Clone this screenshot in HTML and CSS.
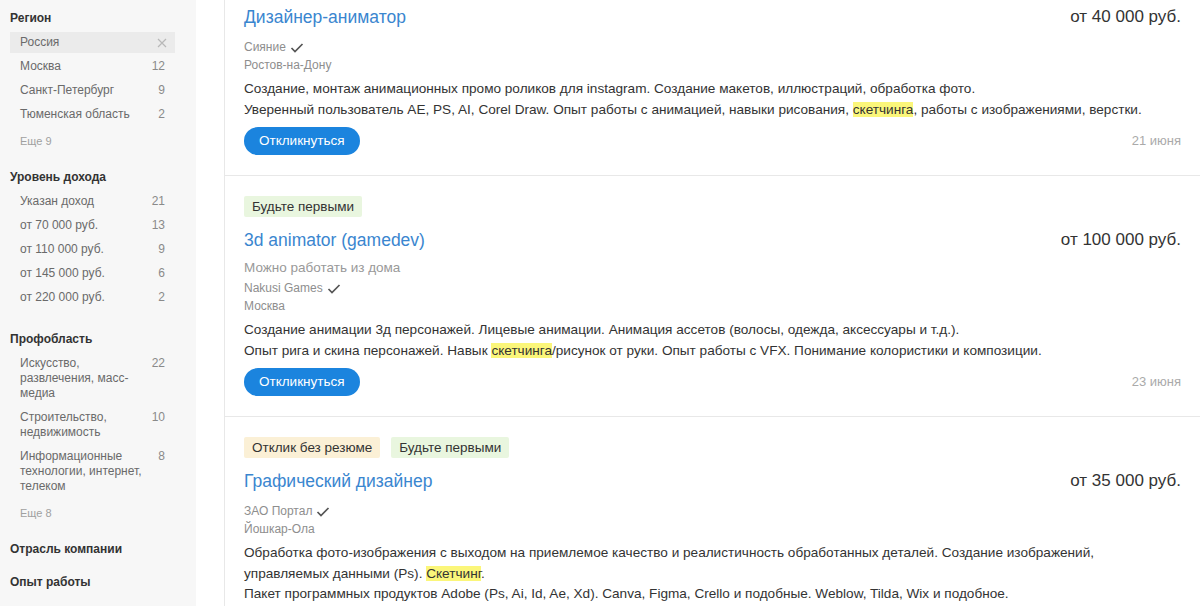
FILE: index.html
```html
<!DOCTYPE html>
<html lang="ru">
<head>
<meta charset="utf-8">
<title>Вакансии</title>
<link rel="stylesheet" href="styles.css">
</head>
<body>
<div class="page">
  <aside class="sidebar">
    <section class="filter">
      <h3 class="filter-title">Регион</h3>
      <ul class="filter-list">
        <li class="filter-item is-selected"><span class="filter-name">Россия</span>
          <svg class="filter-clear" width="10" height="10" viewBox="0 0 10 10"><path d="M1 1 L9 9 M9 1 L1 9" stroke="#b8b8b8" stroke-width="1.2" fill="none"/></svg>
        </li>
        <li class="filter-item"><span class="filter-name">Москва</span><span class="filter-count">12</span></li>
        <li class="filter-item"><span class="filter-name">Санкт-Петербург</span><span class="filter-count">9</span></li>
        <li class="filter-item"><span class="filter-name">Тюменская область</span><span class="filter-count">2</span></li>
      </ul>
      <div class="filter-more">Еще 9</div>
    </section>
    <section class="filter">
      <h3 class="filter-title">Уровень дохода</h3>
      <ul class="filter-list">
        <li class="filter-item"><span class="filter-name">Указан доход</span><span class="filter-count">21</span></li>
        <li class="filter-item"><span class="filter-name">от 70 000 руб.</span><span class="filter-count">13</span></li>
        <li class="filter-item"><span class="filter-name">от 110 000 руб.</span><span class="filter-count">9</span></li>
        <li class="filter-item"><span class="filter-name">от 145 000 руб.</span><span class="filter-count">6</span></li>
        <li class="filter-item"><span class="filter-name">от 220 000 руб.</span><span class="filter-count">2</span></li>
      </ul>
    </section>
    <section class="filter">
      <h3 class="filter-title">Профобласть</h3>
      <ul class="filter-list">
        <li class="filter-item"><span class="filter-name">Искусство, развлечения, масс-медиа</span><span class="filter-count">22</span></li>
        <li class="filter-item"><span class="filter-name">Строительство, недвижимость</span><span class="filter-count">10</span></li>
        <li class="filter-item"><span class="filter-name">Информационные технологии, интернет, телеком</span><span class="filter-count">8</span></li>
      </ul>
      <div class="filter-more">Еще 8</div>
    </section>
    <section class="filter">
      <h3 class="filter-title">Отрасль компании</h3>
    </section>
    <section class="filter">
      <h3 class="filter-title">Опыт работы</h3>
    </section>
  </aside>

  <div class="spacer"></div>

  <main class="results">
    <article class="vacancy vacancy-first">
      <div class="vacancy-head">
        <a class="vacancy-title">Дизайнер-аниматор</a>
        <span class="vacancy-salary">от 40 000 руб.</span>
      </div>
      <div class="vacancy-meta">
        <div class="vacancy-company">Сияние <svg class="check" width="14" height="10" viewBox="0 0 14 10"><path d="M1.5 5 L5 8.5 L12.5 1" stroke="#555" stroke-width="1.7" fill="none"/></svg></div>
        <div class="vacancy-city">Ростов-на-Дону</div>
      </div>
      <p class="vacancy-desc">Создание, монтаж анимационных промо роликов для instagram. Создание макетов, иллюстраций, обработка фото.<br>Уверенный пользователь AE, PS, AI, Corel Draw. Опыт работы с анимацией, навыки рисования, <mark>скетчинга</mark>, работы с изображениями, верстки.</p>
      <div class="vacancy-foot">
        <button class="btn-respond">Откликнуться</button>
        <span class="vacancy-date">21 июня</span>
      </div>
    </article>

    <article class="vacancy">
      <div class="vacancy-badges">
        <span class="badge badge-green">Будьте первыми</span>
      </div>
      <div class="vacancy-head">
        <a class="vacancy-title">3d animator (gamedev)</a>
        <span class="vacancy-salary">от 100 000 руб.</span>
      </div>
      <div class="vacancy-remote">Можно работать из дома</div>
      <div class="vacancy-meta vacancy-meta-tight">
        <div class="vacancy-company">Nakusi Games <svg class="check" width="14" height="10" viewBox="0 0 14 10"><path d="M1.5 5 L5 8.5 L12.5 1" stroke="#555" stroke-width="1.7" fill="none"/></svg></div>
        <div class="vacancy-city">Москва</div>
      </div>
      <p class="vacancy-desc">Создание анимации 3д персонажей. Лицевые анимации. Анимация ассетов (волосы, одежда, аксессуары и т.д.).<br>Опыт рига и скина персонажей. Навык <mark>скетчинга</mark>/рисунок от руки. Опыт работы с VFX. Понимание колористики и композиции.</p>
      <div class="vacancy-foot">
        <button class="btn-respond">Откликнуться</button>
        <span class="vacancy-date">23 июня</span>
      </div>
    </article>

    <article class="vacancy">
      <div class="vacancy-badges">
        <span class="badge badge-yellow">Отклик без резюме</span>
        <span class="badge badge-green">Будьте первыми</span>
      </div>
      <div class="vacancy-head">
        <a class="vacancy-title">Графический дизайнер</a>
        <span class="vacancy-salary">от 35 000 руб.</span>
      </div>
      <div class="vacancy-meta">
        <div class="vacancy-company">ЗАО Портал <svg class="check" width="14" height="10" viewBox="0 0 14 10"><path d="M1.5 5 L5 8.5 L12.5 1" stroke="#555" stroke-width="1.7" fill="none"/></svg></div>
        <div class="vacancy-city">Йошкар-Ола</div>
      </div>
      <p class="vacancy-desc">Обработка фото-изображения с выходом на приемлемое качество и реалистичность обработанных деталей. Создание изображений,<br>управляемых данными (Ps). <mark>Скетчинг</mark>.<br>Пакет программных продуктов Adobe (Ps, Ai, Id, Ae, Xd). Canva, Figma, Crello и подобные. Weblow, Tilda, Wix и подобное.</p>
    </article>
  </main>
</div>
</body>
</html>
```

FILE: styles.css
```css
* { box-sizing: border-box; }

html, body {
  margin: 0;
  padding: 0;
  height: 100%;
  overflow: hidden;
  background: #fff;
  font-family: "Liberation Sans", Arial, sans-serif;
  color: #333;
}

.page {
  display: flex;
  min-height: 100vh;
}

/* Sidebar */
.sidebar {
  width: 196px;
  flex: none;
  background: #f7f7f7;
  padding: 10px 21px 0 10px;
}

.filter {
  margin-bottom: 17px;
}

.filter-title {
  margin: 0 0 6px;
  font-size: 12px;
  line-height: 16px;
  font-weight: bold;
  color: #333;
}

.filter-list {
  list-style: none;
  margin: 0;
  padding: 0 0 3px;
}

.filter-item {
  display: flex;
  justify-content: space-between;
  align-items: flex-start;
  padding: 3px 10px;
  margin-bottom: 3px;
  font-size: 12px;
  line-height: 15px;
  color: #6a6a6a;
}

.filter-item.is-selected {
  background: #ebebeb;
  align-items: center;
}

.filter-name {
  flex: 1;
  padding-right: 8px;
}

.filter-count {
  color: #8a8a8a;
}

.filter-clear {
  display: block;
  margin-right: -2px;
}

.filter-more {
  padding: 3px 10px;
  font-size: 11px;
  line-height: 15px;
  color: #a0a0a0;
}

.spacer {
  width: 28px;
  flex: none;
}

/* Results */
.results {
  flex: 1;
  border-left: 1px solid #e8e8e8;
}

.vacancy {
  padding: 20px 19px 20px 19px;
  border-bottom: 1px solid #e8e8e8;
}

.vacancy-first {
  padding-top: 5px;
}

.vacancy-badges {
  display: flex;
  gap: 11px;
  margin-bottom: 11px;
}

.badge {
  display: inline-block;
  height: 21px;
  line-height: 21px;
  padding: 0 8px;
  font-size: 13.5px;
  color: #333;
  border-radius: 2px;
}

.badge-green { background: #e9f6df; }
.badge-yellow { background: #fbf0d6; }

.vacancy-head {
  display: flex;
  justify-content: space-between;
  align-items: center;
  height: 24px;
  line-height: 24px;
}

.vacancy-title {
  font-size: 17.5px;
  color: #3a86cf;
  text-decoration: none;
}

.vacancy-salary {
  font-size: 17px;
  color: #333;
}

.vacancy-remote {
  margin-top: 8px;
  margin-bottom: 4px;
  font-size: 13.5px;
  line-height: 16px;
  height: 16px;
  color: #999;
}

.vacancy-meta {
  margin-top: 10px;
  font-size: 12px;
  line-height: 17.5px;
  color: #8e8e8e;
}

.vacancy-meta-tight {
  margin-top: 0;
}

.vacancy-company {
  display: flex;
  align-items: center;
  gap: 4px;
  height: 17.5px;
}

.check {
  display: block;
}

.vacancy-desc {
  margin: 5px 0 0;
  font-size: 13.6px;
  line-height: 20.5px;
  color: #333;
}

.vacancy-desc mark {
  background: #fbf67a;
  color: #333;
}

.vacancy-foot {
  display: flex;
  justify-content: space-between;
  align-items: center;
  height: 28px;
  margin-top: 7px;
}

.btn-respond {
  height: 28px;
  padding: 0 15px;
  border: none;
  border-radius: 14px;
  background: #1b84de;
  color: #fff;
  font-family: inherit;
  font-size: 13.5px;
  line-height: 28px;
  cursor: pointer;
}

.vacancy-date {
  font-size: 13px;
  line-height: 16px;
  color: #aaa;
}
```
